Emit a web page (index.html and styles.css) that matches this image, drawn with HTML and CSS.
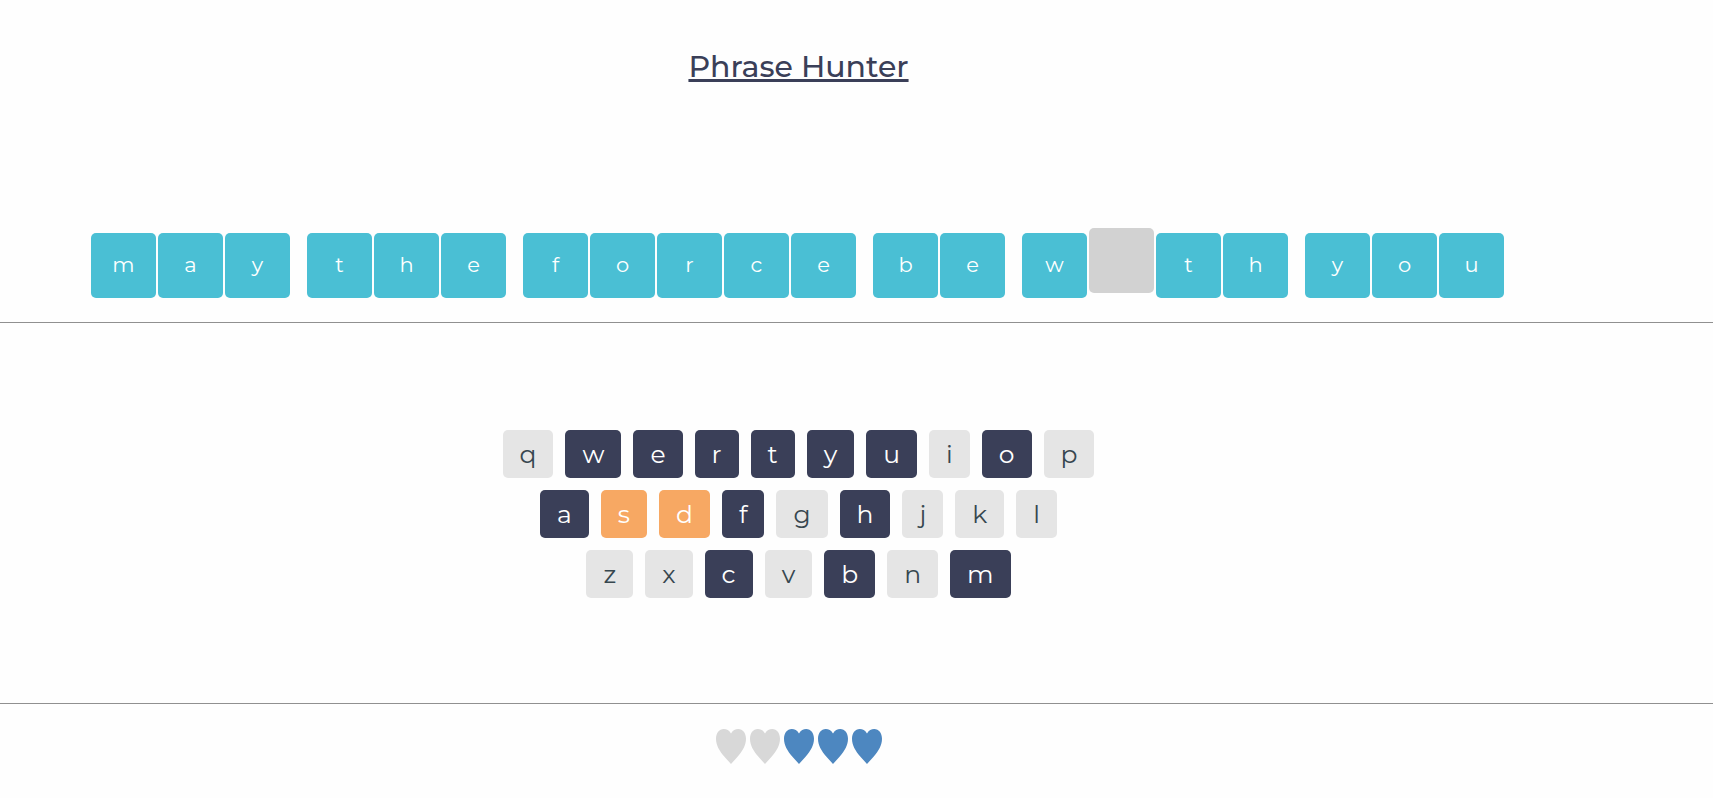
FILE: index.html
```html
<!DOCTYPE html>
<html lang="en">
<head>
<meta charset="utf-8">
<meta name="viewport" content="width=device-width, initial-scale=1">
<title>Phrase Hunter</title>
<link rel="stylesheet" href="styles.css">
</head>
<body>
<svg class="defs" aria-hidden="true"><symbol id="heart" viewBox="0 0 30 35"><path d="M15 4.4C17 1.2 19.3 0 22.2 0 27 0 30 4.3 30 9.8 30 16.3 26.5 22 22 27.3L15 35 8 27.3C3.5 22 0 16.3 0 9.8 0 4.3 3 0 7.8 0 10.7 0 13 1.2 15 4.4Z"/></symbol></svg>
<main class="game">
  <header class="banner"><h1 class="title">Phrase Hunter</h1></header>
  <section class="phrase" aria-label="Phrase">
    <ul class="word"><li class="tile">m</li><li class="tile">a</li><li class="tile">y</li></ul>
    <ul class="word"><li class="tile">t</li><li class="tile">h</li><li class="tile">e</li></ul>
    <ul class="word"><li class="tile">f</li><li class="tile">o</li><li class="tile">r</li><li class="tile">c</li><li class="tile">e</li></ul>
    <ul class="word"><li class="tile">b</li><li class="tile">e</li></ul>
    <ul class="word"><li class="tile">w</li><li class="tile hidden"></li><li class="tile">t</li><li class="tile">h</li></ul>
    <ul class="word"><li class="tile">y</li><li class="tile">o</li><li class="tile">u</li></ul>
  </section>
  <section class="keyboard" aria-label="Keyboard">
    <div class="keyrow">
      <button class="key">q</button><button class="key chosen">w</button><button class="key chosen">e</button><button class="key chosen">r</button><button class="key chosen">t</button><button class="key chosen">y</button><button class="key chosen">u</button><button class="key">i</button><button class="key chosen">o</button><button class="key">p</button>
    </div>
    <div class="keyrow">
      <button class="key chosen">a</button><button class="key wrong">s</button><button class="key wrong">d</button><button class="key chosen">f</button><button class="key">g</button><button class="key chosen">h</button><button class="key">j</button><button class="key">k</button><button class="key">l</button>
    </div>
    <div class="keyrow">
      <button class="key">z</button><button class="key">x</button><button class="key chosen">c</button><button class="key">v</button><button class="key chosen">b</button><button class="key">n</button><button class="key chosen">m</button>
    </div>
  </section>
  <section class="lives" aria-label="Lives: 3 of 5">
    <svg class="heart lost"><use href="#heart"/></svg>
    <svg class="heart lost"><use href="#heart"/></svg>
    <svg class="heart"><use href="#heart"/></svg>
    <svg class="heart"><use href="#heart"/></svg>
    <svg class="heart"><use href="#heart"/></svg>
  </section>
</main>
</body>
</html>
```
FILE: styles.css
```css
* {
  box-sizing: border-box;
}

body {
  margin: 0;
  background: #fefefe;
  color: #3a3f58;
  font-family: Montserrat, Inter, sans-serif;
}

.defs {
  position: absolute;
  width: 0;
  height: 0;
}

.banner,
.keyboard,
.lives {
  padding-right: 116px;
}

.banner {
  padding-top: 47px;
  text-align: center;
}

.title {
  margin: 0;
  font-size: 30px;
  line-height: 40px;
  font-weight: 500;
  text-decoration: underline;
  text-decoration-thickness: 3px;
  text-underline-offset: 2px;
  text-decoration-skip-ink: none;
}

.phrase {
  display: flex;
  flex-wrap: wrap;
  justify-content: center;
  gap: 17px;
  padding: 146px 118px 24px 0;
  border-bottom: 1px solid #909090;
}

.word {
  display: flex;
  gap: 2px;
  margin: 0;
  padding: 0;
  list-style: none;
}

.tile {
  width: 65px;
  height: 65px;
  border-radius: 5px;
  background: #4abfd4;
  color: #fff;
  font-size: 21px;
  line-height: 64px;
  text-align: center;
}

.hidden {
  background: #d2d2d2;
  transform: translateY(-5px);
}

.keyboard {
  display: flex;
  flex-direction: column;
  gap: 12px;
  padding-top: 107px;
  padding-bottom: 105px;
  border-bottom: 1px solid #909090;
}

.keyrow {
  display: flex;
  justify-content: center;
  gap: 12px;
}

.key {
  height: 48px;
  padding: 0 17px;
  border: 0;
  border-radius: 5px;
  background: #e5e5e5;
  color: #37474f;
  font-family: inherit;
  font-size: 25px;
  font-weight: 400;
  line-height: 32px;
  cursor: pointer;
}

.chosen {
  background: #3a3f58;
  color: #fff;
}

.wrong {
  background: #f7a863;
  color: #fff;
}

.lives {
  display: flex;
  justify-content: center;
  gap: 4px;
  padding-top: 25px;
}

.heart {
  width: 30px;
  height: 35px;
  fill: #4d87c0;
}

.lost {
  fill: #d8d8d8;
}
```
